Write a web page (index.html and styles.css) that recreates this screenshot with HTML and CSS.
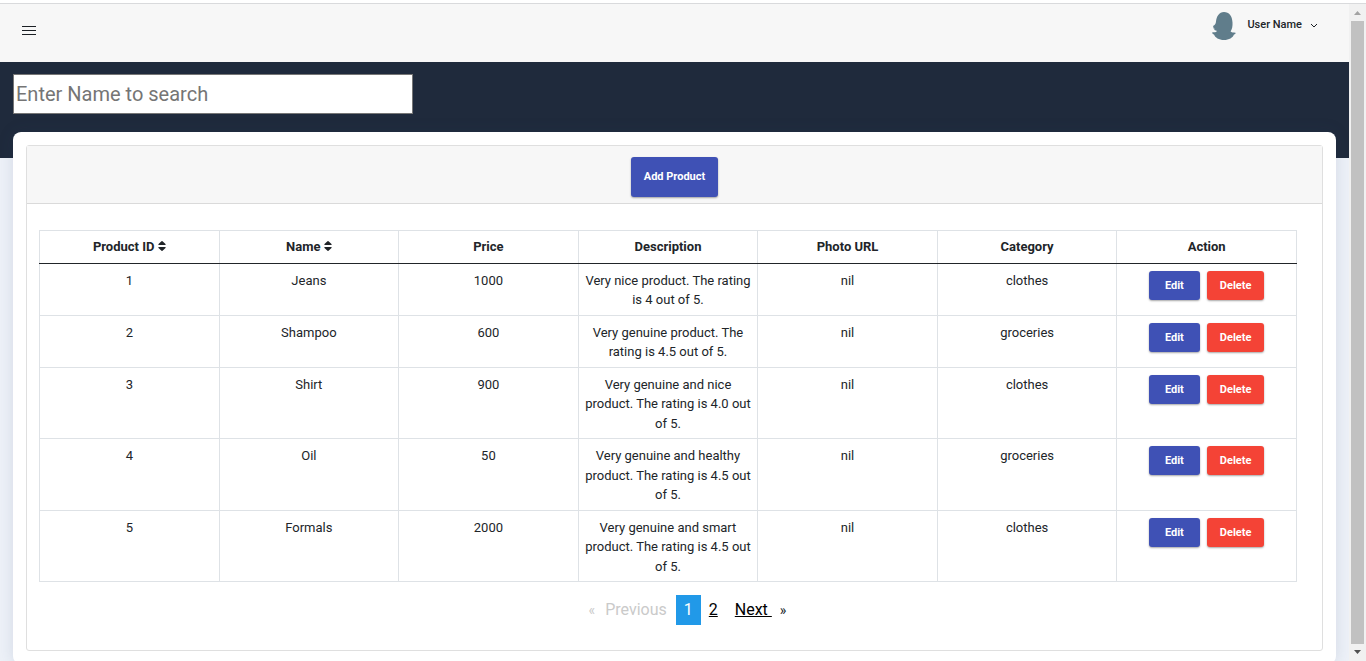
FILE: index.html
```html
<!DOCTYPE html>
<html lang="en">
<head>
<meta charset="utf-8">
<title>Products</title>
<link rel="stylesheet" href="styles.css">
</head>
<body>
<div class="viewport">
  <div class="page">
    <header class="topbar">
      <button class="menu-button" type="button" aria-label="Toggle menu">
        <svg width="14" height="10" viewBox="0 0 14 10" aria-hidden="true"><path d="M0 .5h14M0 4.500h14M0 8.500h14" stroke="#1b1f24" fill="none"/></svg>
      </button>
      <button class="user-menu" type="button">
        <svg class="avatar" width="24" height="28" viewBox="0 0 24 28" aria-hidden="true"><path d="M12 0C7 0 4.500 4.500 4 9.500C3.900 11 3.500 12.300 2.200 13.200C.8 13.800.6 14.700 1.800 15C.8 15.800 1.200 16.600 2.500 16.600C1.900 17.800 2.800 18.600 4 18.500C5 18.600 5 19.500 4 19.900C2.500 20.300.8 20 .2 20.500C.1 21.700 1 22.300 2 22.500C3 25.500 7 28 12 28C17 28 21 25.500 22 22.500C23.200 22.100 23.900 21.300 23.500 20.700C21.500 20.700 19.300 20.500 18.600 19.600C20.200 17 20.700 14 20.500 10.500C20.200 4 17 0 12 0Z" fill="#607d8b"/></svg>
        <span>User Name</span>
        <svg width="8" height="6" viewBox="0 0 8 6" aria-hidden="true"><path d="M1 1l3 3 3-3" stroke="#1b1f24" fill="none"/></svg>
      </button>
    </header>
    <section class="search-band">
      <input class="search" type="text" placeholder="Enter Name to search" aria-label="Enter Name to search">
    </section>
    <main class="card">
      <section class="panel">
        <div class="panel-head"><button class="btn btn-add" type="button">Add Product</button></div>
        <div class="panel-body">
          <table class="products">
            <thead>
              <tr>
                <th>Product ID <svg class="sort" width="8" height="10" viewBox="0 0 8 10" aria-hidden="true"><path d="M.8 4h6.400q.8-.2.3-.9L4.500.3q-.5-.4-1 0L.5 3.100Q0 3.800.8 4zM.8 6h6.400q.8.2.3.9L4.500 9.700q-.5.4-1 0L.5 6.900Q0 6.200.8 6z"/></svg></th>
                <th>Name <svg class="sort" width="8" height="10" viewBox="0 0 8 10" aria-hidden="true"><path d="M.8 4h6.400q.8-.2.3-.9L4.500.3q-.5-.4-1 0L.5 3.100Q0 3.800.8 4zM.8 6h6.400q.8.2.3.9L4.500 9.700q-.5.4-1 0L.5 6.900Q0 6.200.8 6z"/></svg></th>
                <th>Price</th><th>Description</th><th>Photo URL</th><th>Category</th><th>Action</th>
              </tr>
            </thead>
            <tbody>
              <tr><td>1</td><td>Jeans</td><td>1000</td><td>Very nice product. The rating is 4 out of 5.</td><td>nil</td><td>clothes</td><td><div class="actions"><button class="btn" type="button">Edit</button><button class="btn btn-delete" type="button">Delete</button></div></td></tr>
              <tr><td>2</td><td>Shampoo</td><td>600</td><td>Very genuine product. The rating is 4.5 out of 5.</td><td>nil</td><td>groceries</td><td><div class="actions"><button class="btn" type="button">Edit</button><button class="btn btn-delete" type="button">Delete</button></div></td></tr>
              <tr><td>3</td><td>Shirt</td><td>900</td><td>Very genuine and nice product. The rating is 4.0 out of 5.</td><td>nil</td><td>clothes</td><td><div class="actions"><button class="btn" type="button">Edit</button><button class="btn btn-delete" type="button">Delete</button></div></td></tr>
              <tr><td>4</td><td>Oil</td><td>50</td><td>Very genuine and healthy product. The rating is 4.5 out of 5.</td><td>nil</td><td>groceries</td><td><div class="actions"><button class="btn" type="button">Edit</button><button class="btn btn-delete" type="button">Delete</button></div></td></tr>
              <tr><td>5</td><td>Formals</td><td>2000</td><td>Very genuine and smart product. The rating is 4.5 out of 5.</td><td>nil</td><td>clothes</td><td><div class="actions"><button class="btn" type="button">Edit</button><button class="btn btn-delete" type="button">Delete</button></div></td></tr>
            </tbody>
          </table>
          <nav class="pager" aria-label="Pagination">
            <span class="disabled"><span class="arrow">«</span>Previous</span>
            <span class="current" aria-current="page">1</span>
            <a class="number" href="#page-2">2</a>
            <span class="next"><a href="#next">Next&nbsp;</a><span class="arrow">»</span></span>
          </nav>
        </div>
      </section>
    </main>
  </div>
  <div class="scrollbar" aria-hidden="true">
    <svg width="7" height="4" viewBox="0 0 7 4"><path d="M0 4L3.500 0L7 4Z" fill="#a3a3a3"/></svg>
    <div class="thumb"></div>
    <svg width="7" height="4" viewBox="0 0 7 4"><path d="M0 0L3.500 4L7 0Z" fill="#505050"/></svg>
  </div>
</div>
</body>
</html>
```
FILE: styles.css
```css
* { box-sizing: border-box; }
body {
  margin: 0;
  height: 100vh;
  overflow: hidden;
  padding-top: 3px;
  background: #fff;
  color: #212529;
  font: 13px/1.5 Roboto, sans-serif;
}
button, input { font-family: inherit; }
.viewport {
  display: grid;
  grid-template-columns: minmax(0, 1fr) 17px;
  height: 100%;
  border-top: 1px solid #d9dadc;
}
.page { overflow: hidden; background: #edf1f8; }
.topbar {
  display: flex;
  justify-content: space-between;
  align-items: flex-start;
  height: 58px;
  padding: 8px 31px 0 22px;
  background: #f7f7f7;
}
.menu-button, .user-menu {
  display: flex;
  align-items: center;
  padding: 0;
  border: 0;
  background: none;
  color: #212529;
}
.menu-button { padding-top: 14px; }
.user-menu { gap: 8px; font-size: 11px; font-weight: 500; line-height: 16px; }
.user-menu span { padding-bottom: 2px; }
.search-band {
  height: 96px;
  padding: 12px 13px;
  background: #1f2a3c;
}
.avatar { margin-right: 3px; }
.search {
  display: block;
  width: 400px;
  max-width: 100%;
  height: 40px;
  padding: 1px 2px;
  border: 1px solid #767676;
  background: #fff;
  font-size: 20px;
}
.search::placeholder { color: #757575; }
.card {
  position: relative;
  margin: -26px 13px 0;
  padding: 13px;
  border-radius: 8px;
  background: #fff;
  box-shadow: 0 0 16px rgba(40, 60, 100, .13);
}
.panel {
  border: 1px solid #dfdfdf;
  border-radius: 3px;
}
.panel-head {
  display: flex;
  justify-content: center;
  padding: 11px 12px 6px;
  border-bottom: 1px solid #dadada;
  background: #f7f7f7;
}
.panel-body { padding: 26px 25px 25px 12px; }
.btn {
  height: 29px;
  padding: 0 13px;
  border: 0;
  border-radius: 3px;
  background: #3f51b5;
  color: #fff;
  font-size: 11px;
  font-weight: 700;
  box-shadow: 0 1px 2px rgba(0, 0, 0, .35);
}
.btn-add { height: 40px; padding-bottom: 2px; }
.btn-delete { background: #f44336; }
.actions { display: flex; justify-content: center; gap: 7px; }
.actions .btn:first-child { padding: 0 16px; }
.products {
  width: 100%;
  table-layout: fixed;
  border-collapse: collapse;
  text-align: center;
}
.products th, .products td {
  padding: 6px;
  border: 1px solid #dee2e6;
  vertical-align: top;
}
.products td { padding: 7px 6px 5px; }
.products thead th { border-bottom: 1px solid #212529; font-weight: 700; }
.products tbody tr:first-child td { border-top-color: #212529; }
.sort { fill: #212529; }
.pager {
  display: flex;
  justify-content: center;
  padding-top: 13px;
  padding-left: 39px;
  font-size: 16px;
  line-height: 29px;
}
.pager a { color: #000; text-decoration: underline; }
.disabled { padding-right: 9px; color: #cacaca; }
.disabled .arrow { margin-right: 10px; }
.current { padding: 0 8px; background: #2199e8; color: #fefefe; }
.number { padding: 0 8px; }
.next { padding-left: 9px; }
.next .arrow { margin-left: 8px; }
.arrow { font-size: 14px; }
.scrollbar {
  display: flex;
  flex-direction: column;
  align-items: center;
  gap: 6px;
  padding: 7px 0;
  background: #f1f1f1;
}
.thumb { flex: 1; width: 13px; background: #c1c1c1; }
```
